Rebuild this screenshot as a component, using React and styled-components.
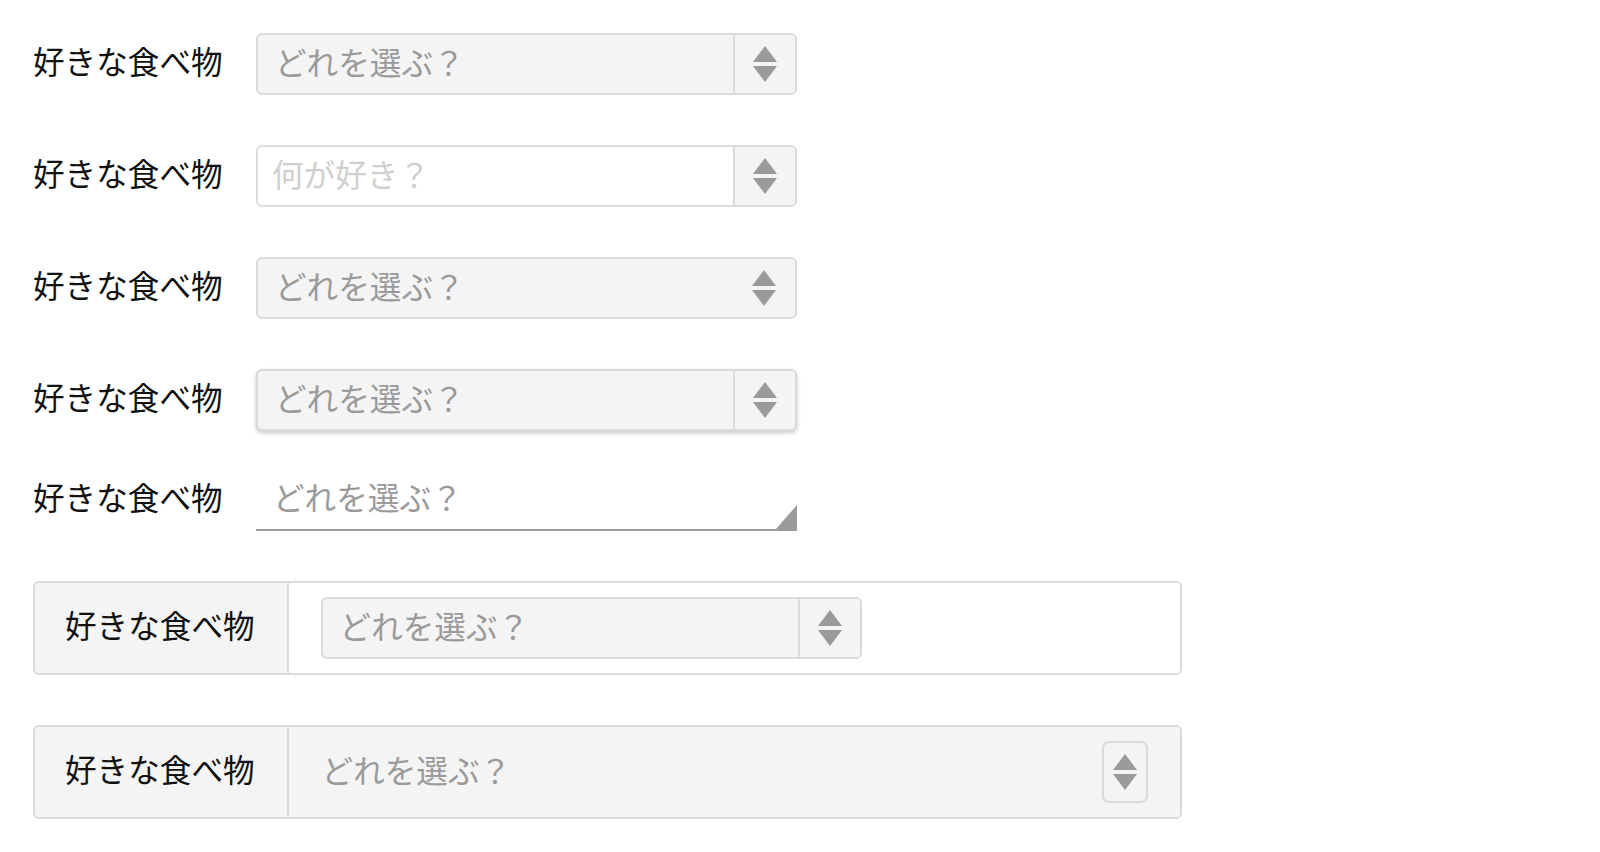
import React from "react";
import styled, { createGlobalStyle, css } from "styled-components";

const GlobalStyle = createGlobalStyle`
  html, body {
    margin: 0;
    padding: 0;
    background: #ffffff;
    font-family: "Noto Sans CJK JP", "Noto Sans", sans-serif;
  }
  * { box-sizing: border-box; }
`;

const Page = styled.div`
  display: flex;
  flex-direction: column;
  align-items: flex-start;
  gap: 50px;
  padding: 33px 0 0 33px;
`;

const Row = styled.div`
  display: grid;
  grid-template-columns: 192px 541px;
  column-gap: 31px;
  align-items: center;
  margin-top: ${(p) => p.$mt || 0}px;
`;

const Label = styled.div`
  font-size: 31.6px;
  line-height: 1;
  padding-bottom: 6px;
  color: #111;
  white-space: nowrap;
`;

const SelectBox = styled.div`
  display: flex;
  align-items: stretch;
  width: ${(p) => p.$w || 541}px;
  height: 62px;
  border: 2px solid #dadada;
  border-radius: 6px;
  background: ${(p) => (p.$white ? "#ffffff" : "#f4f4f4")};
  ${(p) =>
    p.$raised &&
    css`
      box-shadow: 0 2px 4px rgba(0, 0, 0, 0.22);
    `}
  ${(p) =>
    p.$underline &&
    css`
      border: none;
      border-bottom: 2px solid #9a9a9a;
      border-radius: 0;
      background: transparent;
    `}
`;

const Value = styled.div`
  flex: 1;
  display: flex;
  align-items: center;
  padding-left: ${(p) => p.$pl || 17}px;
  padding-bottom: 5px;
  font-size: 31.6px;
  line-height: 1;
  color: ${(p) => (p.$faint ? "#cfcfcf" : "#9a9a9a")};
  white-space: nowrap;
`;

const ArrowCell = styled.div`
  width: 62px;
  display: flex;
  align-items: center;
  justify-content: center;
  ${(p) =>
    p.$divided &&
    css`
      border-left: 2px solid #dadada;
      background: #f4f4f4;
      border-radius: 0 4px 4px 0;
    `}
`;

const CornerCell = styled.div`
  display: flex;
  align-items: flex-end;
`;

const Group = styled.div`
  display: flex;
  width: 1149px;
  height: 94px;
  border: 2px solid #dadada;
  border-radius: 6px;
  overflow: hidden;
`;

const Addon = styled.div`
  display: flex;
  align-items: center;
  padding: 0 32px 0 30px;
  background: #f4f4f4;
  border-right: 2px solid #dadada;
`;

const GroupBody = styled.div`
  flex: 1;
  display: flex;
  align-items: center;
  padding: 0 32px;
  background: ${(p) => (p.$filled ? "#f4f4f4" : "#ffffff")};
`;

const SpinButton = styled.div`
  width: 46px;
  height: 62px;
  display: flex;
  align-items: center;
  justify-content: center;
  border: 2px solid #dadada;
  border-radius: 7px;
`;

const Arrows = () => (
  <svg width="24" height="36" viewBox="0 0 24 36" aria-hidden="true">
    <polygon points="12,0 24,16 0,16" fill="#9a9a9a" />
    <polygon points="0,20 24,20 12,36" fill="#9a9a9a" />
  </svg>
);

const Corner = () => (
  <svg width="21" height="24" viewBox="0 0 21 24" aria-hidden="true">
    <polygon points="21,0 21,24 0,24" fill="#9a9a9a" />
  </svg>
);

const LABEL = "好きな食べ物";
const PICK = "どれを選ぶ？";

export default function App() {
  return (
    <>
      <GlobalStyle />
      <Page>
        <Row>
          <Label>{LABEL}</Label>
          <SelectBox>
            <Value>{PICK}</Value>
            <ArrowCell $divided>
              <Arrows />
            </ArrowCell>
          </SelectBox>
        </Row>

        <Row>
          <Label>{LABEL}</Label>
          <SelectBox $white>
            <Value $faint $pl={14}>何が好き？</Value>
            <ArrowCell $divided>
              <Arrows />
            </ArrowCell>
          </SelectBox>
        </Row>

        <Row>
          <Label>{LABEL}</Label>
          <SelectBox>
            <Value>{PICK}</Value>
            <ArrowCell>
              <Arrows />
            </ArrowCell>
          </SelectBox>
        </Row>

        <Row>
          <Label>{LABEL}</Label>
          <SelectBox $raised>
            <Value>{PICK}</Value>
            <ArrowCell $divided>
              <Arrows />
            </ArrowCell>
          </SelectBox>
        </Row>

        <Row $mt={-12}>
          <Label>{LABEL}</Label>
          <SelectBox $underline>
            <Value>{PICK}</Value>
            <CornerCell>
              <Corner />
            </CornerCell>
          </SelectBox>
        </Row>

        <Group>
          <Addon>
            <Label>{LABEL}</Label>
          </Addon>
          <GroupBody>
            <SelectBox $w={541}>
              <Value>{PICK}</Value>
              <ArrowCell $divided>
                <Arrows />
              </ArrowCell>
            </SelectBox>
          </GroupBody>
        </Group>

        <Group>
          <Addon>
            <Label>{LABEL}</Label>
          </Addon>
          <GroupBody $filled>
            <Value $pl={1}>{PICK}</Value>
            <SpinButton>
              <Arrows />
            </SpinButton>
          </GroupBody>
        </Group>
      </Page>
    </>
  );
}
